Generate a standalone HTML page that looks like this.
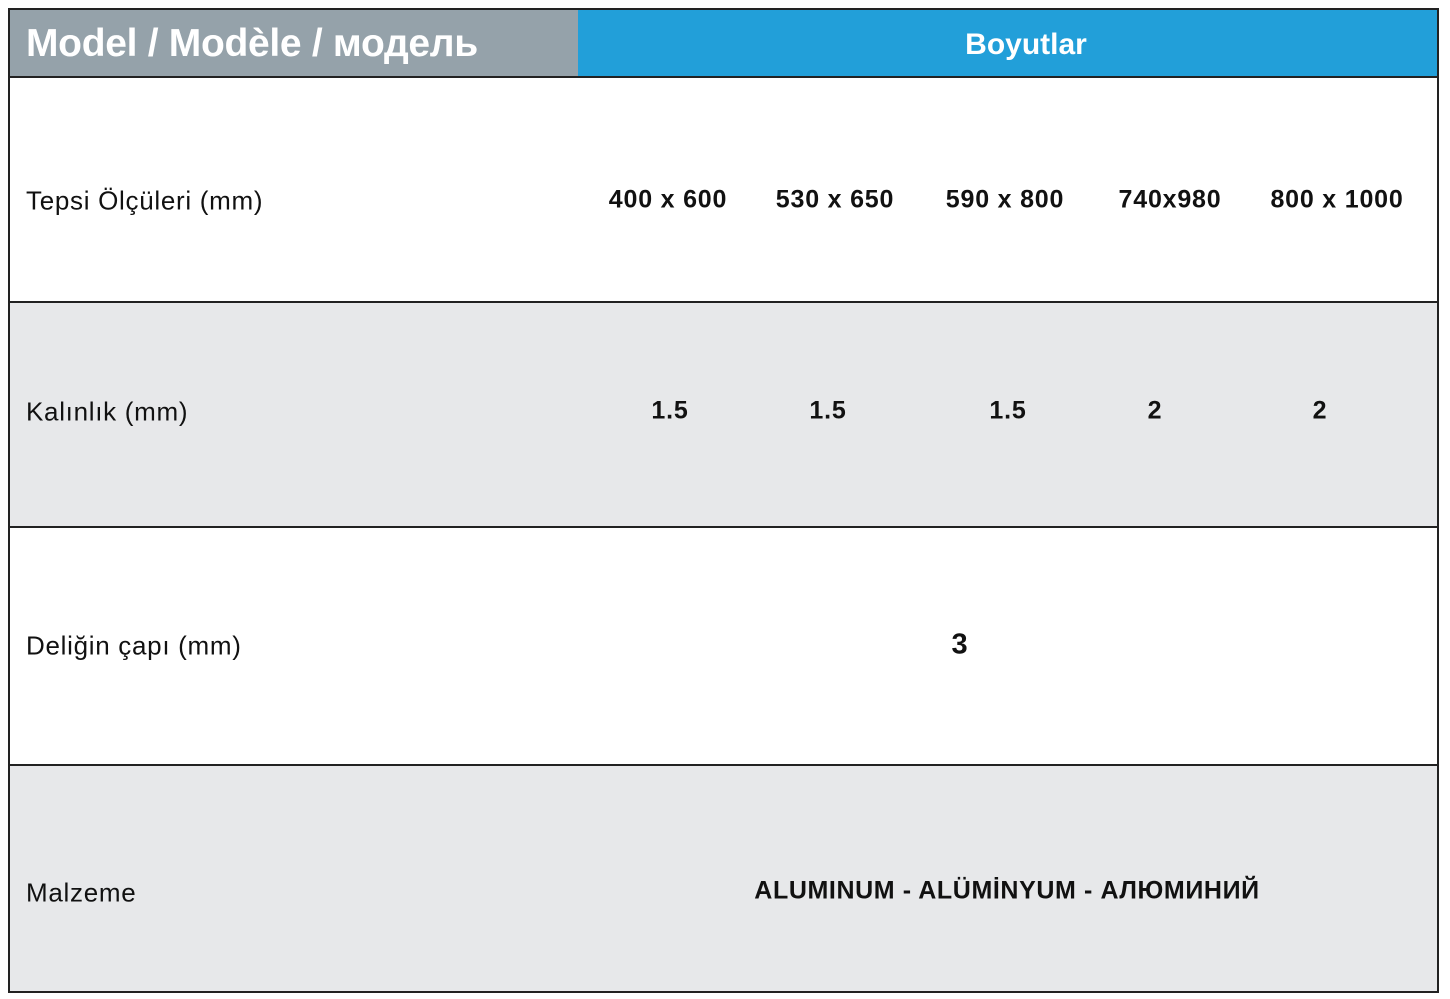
<!DOCTYPE html><html><head><meta charset="utf-8"><style>
body{margin:0;width:1450px;height:999px;background:#fff;position:relative;font-family:"Liberation Sans",sans-serif;overflow:hidden}
div{position:absolute;box-sizing:border-box}
.t{white-space:nowrap;transform:translate(-50%,-50%);font-weight:bold;font-size:25px;letter-spacing:0.8px;color:#111}
.l{left:26px;font-size:26px;letter-spacing:0.7px;color:#111;transform:translateY(-50%);white-space:nowrap}
</style></head><body>
<div style="left:8px;top:8px;width:1431px;height:985px;border:2px solid #222"></div>
<div style="left:10px;top:10px;width:568px;height:68px;background:#95a2aa;border-bottom:2px solid #222"></div>
<div style="left:578px;top:10px;width:859px;height:68px;background:#229fd9;border-bottom:2px solid #222"></div>
<div style="left:26px;top:44px;transform:translateY(-50%);color:#fff;font-weight:bold;font-size:39px;white-space:nowrap;letter-spacing:-0.3px">Model / Modèle / модель</div>
<div class="t" style="left:1026px;top:45px;color:#fff;font-size:30px;letter-spacing:0">Boyutlar</div>
<div style="left:10px;top:301px;width:1427px;height:227px;background:#e7e8ea;border-top:2px solid #222;border-bottom:2px solid #222"></div>
<div style="left:10px;top:764px;width:1427px;height:227px;background:#e7e8ea;border-top:2px solid #222"></div>
<div class="l" style="top:201px">Tepsi Ölçüleri (mm)</div>
<div class="l" style="top:412px">Kalınlık (mm)</div>
<div class="l" style="top:646px">Deliğin çapı (mm)</div>
<div class="l" style="top:893px">Malzeme</div>
<div class="t" style="left:668px;top:200px">400 x 600</div>
<div class="t" style="left:835px;top:200px">530 x 650</div>
<div class="t" style="left:1005px;top:200px">590 x 800</div>
<div class="t" style="left:1170px;top:200px">740x980</div>
<div class="t" style="left:1337px;top:200px">800 x 1000</div>
<div class="t" style="left:670px;top:411px">1.5</div>
<div class="t" style="left:828px;top:411px">1.5</div>
<div class="t" style="left:1008px;top:411px">1.5</div>
<div class="t" style="left:1155px;top:411px">2</div>
<div class="t" style="left:1320px;top:411px">2</div>
<div class="t" style="left:960px;top:645px;font-size:29px">3</div>
<div class="t" style="left:1007px;top:891px;letter-spacing:0.6px">ALUMINUM - ALÜMİNYUM - АЛЮМИНИЙ</div>
</body></html>
